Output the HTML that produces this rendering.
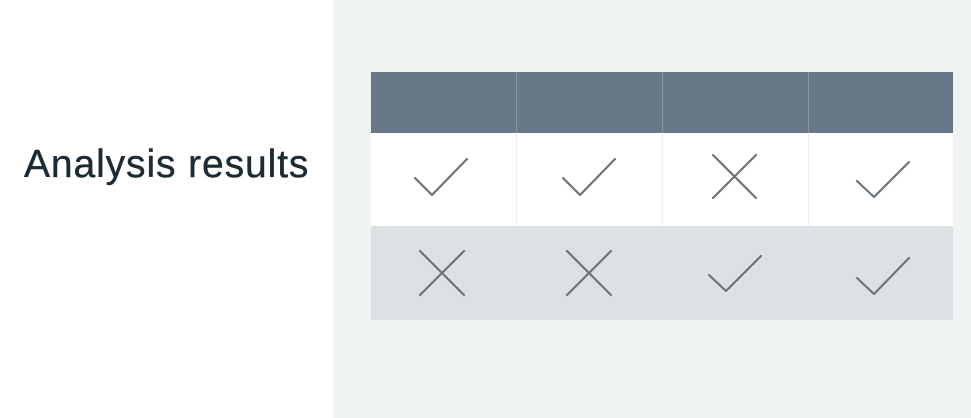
<!DOCTYPE html>
<html><head><style>
html,body{margin:0;padding:0;width:971px;height:418px;overflow:hidden;background:#eff4f3}
.left{position:absolute;left:0;top:0;width:333px;height:418px;background:#fff}
.t{position:absolute;left:24px;top:143px;font:39px "Liberation Sans",sans-serif;color:#1c2b33;letter-spacing:0.9px;-webkit-text-stroke:0.4px #1c2b33;white-space:nowrap}
svg{position:absolute;left:0;top:0}
</style></head><body>
<div class="left"></div>
<div class="t">Analysis results</div>
<svg width="971" height="418" viewBox="0 0 971 418">
<rect x="371" y="72" width="582" height="61" fill="#677786"/>
<rect x="371" y="133" width="582" height="93" fill="#fff"/>
<rect x="371" y="226" width="582" height="94" fill="#dde1e4"/>
<g stroke="#8897a4" stroke-width="1"><line x1="516.5" y1="72" x2="516.5" y2="133"/><line x1="662.5" y1="72" x2="662.5" y2="133"/><line x1="808.5" y1="72" x2="808.5" y2="133"/></g>
<g stroke="#eceeef" stroke-width="1"><line x1="516.5" y1="133" x2="516.5" y2="226"/><line x1="662.5" y1="133" x2="662.5" y2="226"/><line x1="808.5" y1="133" x2="808.5" y2="226"/></g>
<g stroke="#6b747c" stroke-width="2.2" fill="none" stroke-linecap="round" stroke-linejoin="round">
<polyline points="415,178 432,195 467,159"/>
<polyline points="563,178 580,195 615,159"/>
<path d="M713,155 L756,198 M756,155 L713,198"/>
<polyline points="857,181 874,197 909,162"/>
<path d="M420,251 L464,295 M464,251 L420,295"/>
<path d="M567,251 L611,295 M611,251 L567,295"/>
<polyline points="709,275 726,291 761,256"/>
<polyline points="857,278 874,294 909,258"/>
</g>
</svg>
</body></html>
